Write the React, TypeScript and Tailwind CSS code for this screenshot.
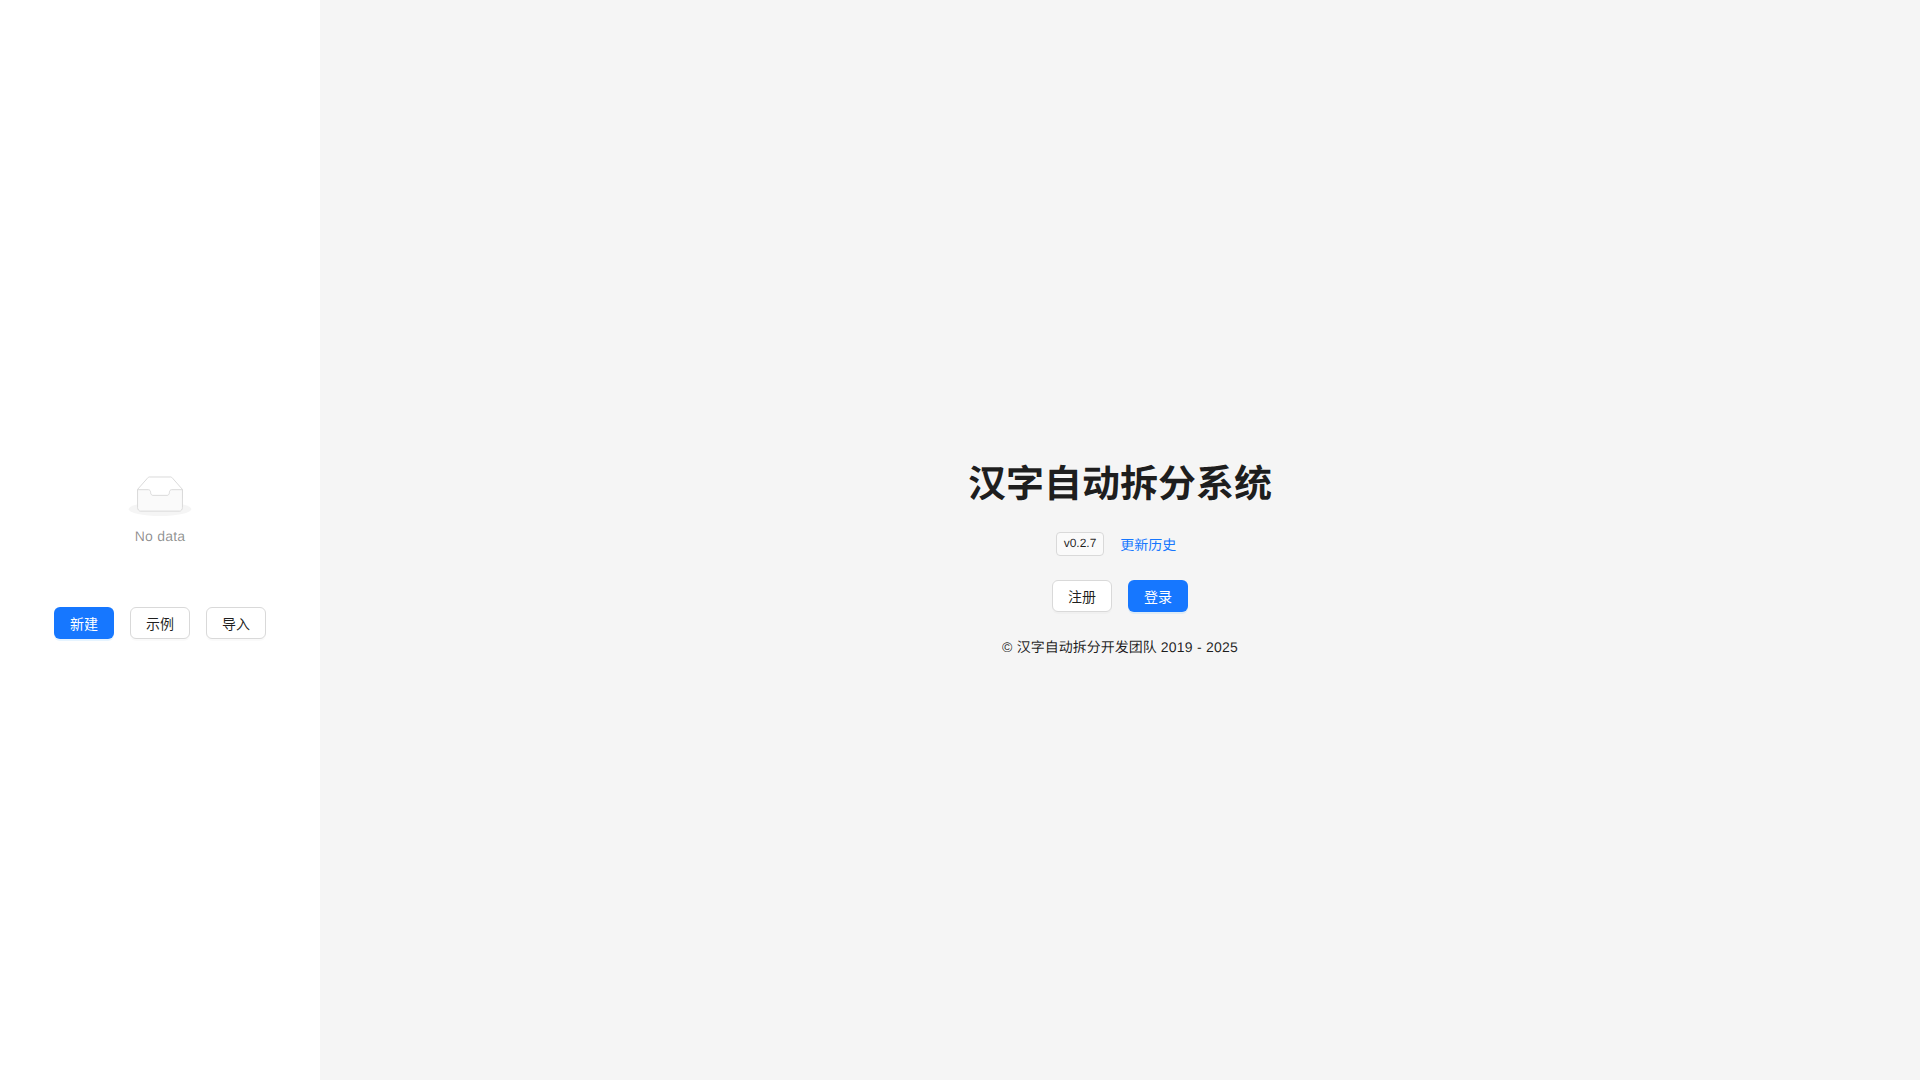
const fontStack = "font-['Liberation_Sans','Noto_Sans_CJK_SC',sans-serif] [text-rendering:geometricPrecision]";

function EmptyIcon() {
  return (
    <svg width="64" height="40" viewBox="0 0 64 41">
      <g transform="translate(0 1)" fill="none" fillRule="evenodd">
        <ellipse fill="#f5f5f5" cx="32" cy="33" rx="32" ry="7" />
        <g fillRule="nonzero" stroke="#d9d9d9">
          <path d="M55 12.76L44.854 1.258C44.367.474 43.656 0 42.907 0H21.093c-.749 0-1.46.474-1.947 1.257L9 12.761V22h46v-9.24z" />
          <path
            d="M41.613 15.931c0-1.605.994-2.93 2.227-2.931H55v18.137C55 33.26 53.68 35 52.05 35h-40.1C10.32 35 9 33.259 9 31.137V13h11.16c1.233 0 2.227 1.323 2.227 2.928v.022c0 1.605 1.005 2.901 2.237 2.901h14.752c1.232 0 2.237-1.308 2.237-2.913v-.007z"
            fill="#fafafa"
          />
        </g>
      </g>
    </svg>
  );
}

function Btn({ label, primary }: { label: string; primary?: boolean }) {
  return (
    <button
      className={
        primary
          ? "h-8 w-[60px] rounded-md bg-[#1677ff] pt-0.5 text-sm text-white shadow-[0_2px_0_rgba(5,145,255,0.1)]"
          : "h-8 w-[60px] rounded-md border border-[#d9d9d9] bg-white pt-0.5 text-sm text-[rgba(0,0,0,0.88)] shadow-[0_2px_0_rgba(0,0,0,0.02)]"
      }
    >
      {label}
    </button>
  );
}

export default function App() {
  return (
    <div className={`flex h-screen w-full ${fontStack}`}>
      {/* Sidebar */}
      <aside className="flex w-[320px] shrink-0 flex-col items-center justify-center bg-white pt-[34px]">
        <div className="flex flex-col items-center">
          <EmptyIcon />
          <p className="mt-[9px] text-sm leading-[22px] tracking-[0.22px] text-[rgba(0,0,0,0.45)]">No data</p>
        </div>
        <div className="mt-[60px] flex gap-4">
          <Btn label="新建" primary />
          <Btn label="示例" />
          <Btn label="导入" />
        </div>
      </aside>

      {/* Main */}
      <main className="flex flex-1 flex-col items-center justify-center bg-[#f5f5f5] pt-10">
        <h1 className="text-[38px] leading-[46px] font-semibold text-[rgba(0,0,0,0.88)]">汉字自动拆分系统</h1>
        <div className="mt-6 flex items-start gap-4 pr-2">
          <span className="rounded border border-[#d9d9d9] bg-[#fafafa] px-[7px] pb-px text-xs leading-[21px] text-[rgba(0,0,0,0.88)]">v0.2.7</span>
          <a className="mt-0.5 text-sm leading-[22px] text-[#1677ff]">更新历史</a>
        </div>
        <div className="mt-6 flex gap-4">
          <Btn label="注册" />
          <Btn label="登录" primary />
        </div>
        <p className="mt-6 text-sm leading-[22px] text-[rgba(0,0,0,0.88)]">
          <span className="tracking-[0.22px]">© </span>汉字自动拆分开发团队<span className="tracking-[0.22px]"> 2019 - 2025</span>
        </p>
      </main>
    </div>
  );
}
